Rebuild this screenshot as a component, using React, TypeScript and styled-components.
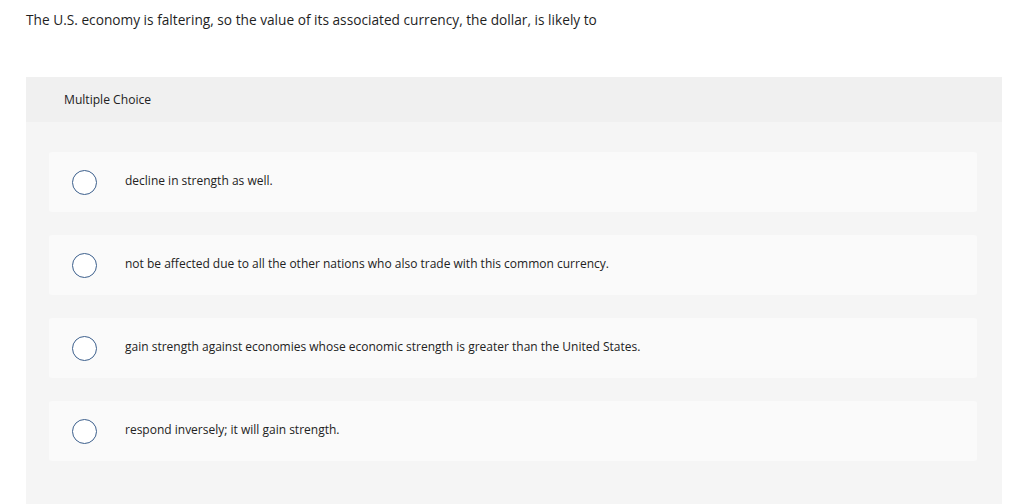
import React from "react";
import styled, { createGlobalStyle } from "styled-components";

const Global = createGlobalStyle`
  html, body { margin: 0; padding: 0; background: #ffffff; }
  body { font-family: "Open Sans", "Liberation Sans", sans-serif; color: #1a1a1a; }
`;

const Page = styled.div`
  padding: 11px 22px 0 26px;
`;

const Question = styled.p`
  margin: 0;
  font-size: 13.7px;
  line-height: 18px;
  color: #1f1f1f;
`;

const Panel = styled.section`
  margin-top: 48px;
  background: #f5f5f5;
  padding-bottom: 60px;
`;

const Header = styled.div`
  height: 45px;
  display: flex;
  align-items: center;
  padding-left: 38px;
  background: #f0f0f0;
  font-size: 12.1px;
  color: #222;
`;

const Options = styled.div`
  display: flex;
  flex-direction: column;
  gap: 23px;
  padding: 30px 25px 0 23px;
`;

const Option = styled.label`
  display: flex;
  align-items: center;
  height: 60px;
  background: #fafafa;
  border-radius: 3px;
  padding-left: 23px;
  cursor: pointer;
`;

const Radio = styled.span`
  width: 25px;
  height: 25px;
  border: 1px solid #3c5f8c;
  border-radius: 50%;
  box-sizing: border-box;
  flex: none;
  background: #fff;
`;

const OptionText = styled.span`
  margin-left: 28px;
  font-size: 12px;
  line-height: 16px;
  margin-top: -2px;
  color: #222;
`;

const choices = [
  "decline in strength as well.",
  "not be affected due to all the other nations who also trade with this common currency.",
  "gain strength against economies whose economic strength is greater than the United States.",
  "respond inversely; it will gain strength.",
];

export default function App() {
  return (
    <Page>
      <Global />
      <Question>
        The U.S. economy is faltering, so the value of its associated currency, the dollar, is likely to
      </Question>
      <Panel>
        <Header>Multiple Choice</Header>
        <Options>
          {choices.map((c) => (
            <Option key={c}>
              <Radio />
              <OptionText>{c}</OptionText>
            </Option>
          ))}
        </Options>
      </Panel>
    </Page>
  );
}
